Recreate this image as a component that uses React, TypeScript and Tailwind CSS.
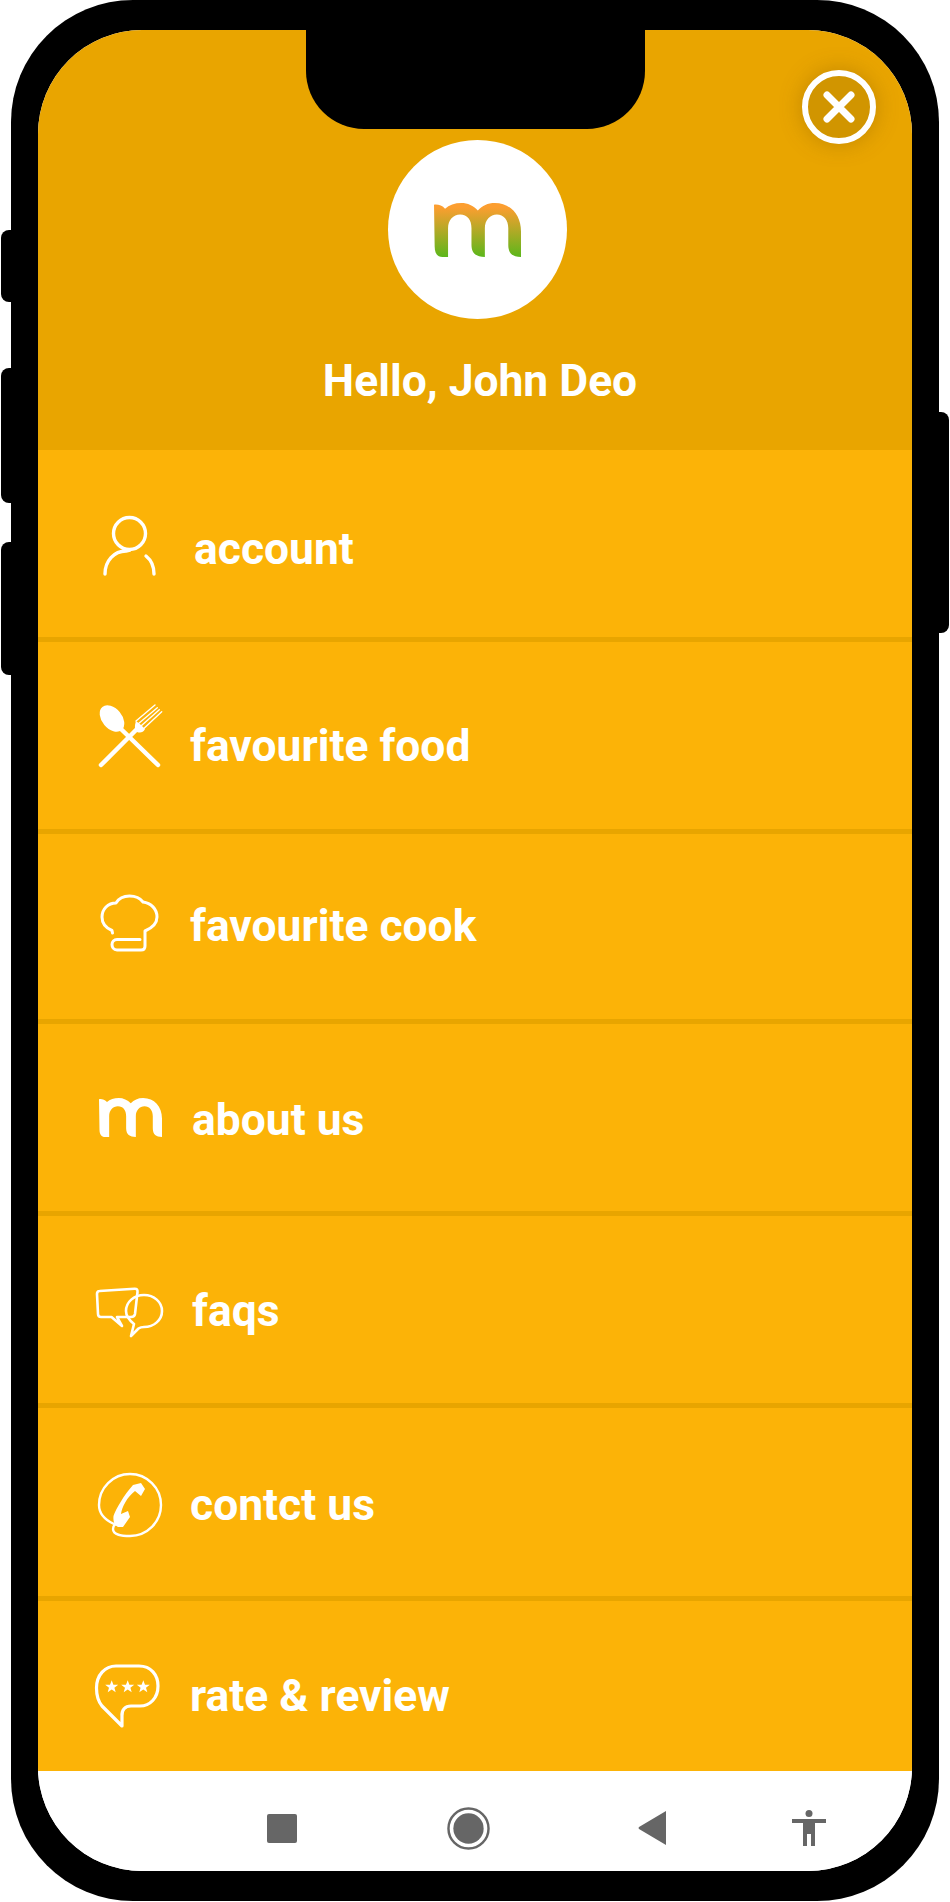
import { ReactNode } from 'react';

const stroke = { fill: 'none', stroke: 'white', strokeWidth: 3, strokeLinecap: 'round', strokeLinejoin: 'round' } as const;

const MARK =
  'M0 5C10 3 25 7 33 17C45 6 62 0 82 0C100 0 118 8 131 22C145 8 160 0 182 0C228 0 260 35 260 85L260 161C235 161 222 150 222 125L222 75C222 50 208 34 188 34C168 34 152 50 152 75L152 161C127 161 112 150 112 125L112 75C112 50 100 34 78 34C58 34 42 50 42 75L42 161L25 161C10 161 2 150 2 130Z';

function LogoMark({ className, gradient }: { className: string; gradient?: boolean }) {
  return (
    <svg viewBox="0 0 260 161" className={className} preserveAspectRatio="none">
      {gradient && (
        <defs>
          <linearGradient id="markFill" x1="0" y1="0" x2="0" y2="1">
            <stop offset="0.08" stopColor="#fc9e30" />
            <stop offset="1" stopColor="#5cb71b" />
          </linearGradient>
        </defs>
      )}
      <path d={MARK} fill={gradient ? 'url(#markFill)' : 'white'} />
    </svg>
  );
}

function Icon({ children }: { children: ReactNode }) {
  return (
    <svg viewBox="0 0 72 72" className="w-[72px] h-[72px] shrink-0">
      {children}
    </svg>
  );
}

const AccountIcon = () => (
  <Icon>
    <circle cx="35.5" cy="24.5" r="16" {...stroke} strokeWidth={3.4} />
    <path d="M11 65C11 52 20 42 32 42L36 41M52 47C57 51 60 58 60 65" {...stroke} strokeWidth={3.4} />
  </Icon>
);

const FoodIcon = () => (
  <Icon>
    <ellipse cx="18" cy="18.5" rx="15" ry="10" transform="rotate(50 18 18.5)" fill="white" />
    <path d="M27 29L64 65" {...stroke} strokeWidth={4.5} />
    <path d="M43 29L7 65" {...stroke} strokeWidth={4.5} />
    <path d="M42 21C40 27 41 31 43 32C46 33 49 33 51 29L47 25Z" fill="white" />
    <path d="M42 21L61 5M44.3 23.7L63.3 7.7M46.7 26.3L65.3 9.7M49.3 29L67.7 11.7" {...stroke} strokeWidth={1.4} />
  </Icon>
);

const CookIcon = () => (
  <Icon>
    <path
      d="M18.5 46L18 43.5C12 41 8 36 8 30C8 22 14 16 22 16C25 11 30 9 35.5 9C41 9 46 11 49 15C57 16 63 22 63 30C63 37 58 41 51 44L51 59C51 62 49 63 47 63L23 63C19.5 63 18 60 18 57.5C18 55 20 52.5 23 52.5L46 52.5"
      {...stroke}
    />
  </Icon>
);

const FaqIcon = () => (
  <Icon>
    <path d="M5.5 15L40.5 12.7Q43.8 12.5 43.5 16L41 38Q40.5 41 37 41L23 41L28 50L17.5 41L7 41Q4 41 4 38L3 18Q3 15 5.5 15Z" {...stroke} strokeWidth={2.6} />
    <path d="M40 48C35 44 32 40 32 35C32 26 40 19 50 19C60 19 68 26 68 35C68 44 60 51 50 51C48 51 46 51.5 44.5 52.5L37 60Z" {...stroke} strokeWidth={2.6} />
  </Icon>
);

const PhoneIcon = () => (
  <Icon>
    <path
      d="M20 55C9 50 5 44 5 36A31 31 0 0 1 36 5A31 31 0 0 1 67 36A31 31 0 0 1 36 67C28 67 19 66 19 60C19 58 20 56 22 55"
      {...stroke}
      strokeWidth={2.4}
    />
    <path d="M39 16C30 26 22 40 19.500 47C19 52 20 56 24 58L29 58L36 48L34 42L27 45C28 38 33 28 41 22L47 27L51 20L47 14Z" fill="white" />
  </Icon>
);

const Star = ({ x }: { x: number }) => (
  <polygon
    fill="white"
    points={[
      [0, -6.5], [1.7, -2], [6.5, -2], [2.7, 1], [4, 5.5], [0, 2.8], [-4, 5.5], [-2.7, 1], [-6.5, -2], [-1.7, -2],
    ]
      .map(([a, b]) => `${a + x},${b + 26.7}`)
      .join(' ')}
  />
);

const RateIcon = () => (
  <Icon>
    <path
      d="M28 66L8 46C4 41 2.500 35 2.500 28C2.500 15 11 6 22 6L45 6C57 6 64 15 64 26C64 38 56 46 46 46L37 46C31 46 27.500 50 28 56Z"
      {...stroke}
      strokeWidth={3.2}
    />
    <Star x={17.7} />
    <Star x={33.7} />
    <Star x={49.3} />
  </Icon>
);

const menu = [
  { label: 'account', icon: <AccountIcon />, row: 'h-[192px] pt-[3px]', text: 'ml-[28px] mt-[7px]' },
  { label: 'favourite food', icon: <FoodIcon />, row: 'h-[192px]', text: 'ml-[24px] mt-[20px]' },
  { label: 'favourite cook', icon: <CookIcon />, row: 'h-[190px] pb-[7px]', text: 'ml-[24px] mt-[6px]' },
  { label: 'about us', icon: <div className="w-[72px] flex justify-center shrink-0"><LogoMark className="w-[63px] h-[39px]" /></div>, row: 'h-[192px]', text: 'ml-[26px] mt-[5px]' },
  { label: 'faqs', icon: <FaqIcon />, row: 'h-[192px] pt-[5px]', text: 'ml-[26px] mb-[3px]' },
  { label: 'contct us', icon: <PhoneIcon />, row: 'h-[193px] pt-[6px]', text: 'ml-[24px]' },
];

export default function App() {
  return (
    <div className="relative w-[950px] h-[1902px] bg-white overflow-hidden font-['Roboto',sans-serif]">
      {/* side buttons */}
      <div className="absolute left-[1px] top-[230px] w-[20px] h-[72px] bg-black rounded-l-[8px]" />
      <div className="absolute left-[1px] top-[368px] w-[20px] h-[135px] bg-black rounded-l-[8px]" />
      <div className="absolute left-[1px] top-[542px] w-[20px] h-[133px] bg-black rounded-l-[8px]" />
      <div className="absolute right-[1px] top-[412px] w-[20px] h-[221px] bg-black rounded-r-[8px]" />

      <div className="relative ml-[11px] w-[928px] h-[1901px] bg-black rounded-[122px] pt-[30px] px-[27px]">
        <div className="relative w-[874px] h-[1841px] bg-white rounded-[104px] overflow-hidden flex flex-col">
          <div className="absolute z-10 left-[268px] top-0 w-[339px] h-[99px] bg-black rounded-b-[58px]" />

          <div className="relative h-[420px] shrink-0 bg-[#e9a500] flex flex-col items-center pt-[110px]">
            <div className="absolute left-[764px] top-[40px] w-[74px] h-[74px] rounded-full border-[6px] border-white bg-[#d19500] shadow-[0_0_22px_rgba(120,80,0,0.35)] flex items-center justify-center">
              <svg viewBox="0 0 32 32" className="w-[32px] h-[32px]">
                <path d="M4 4L28 28M28 4L4 28" fill="none" stroke="white" strokeWidth="7" strokeLinecap="round" />
              </svg>
            </div>
            <div className="w-[179px] h-[179px] ml-[5px] rounded-full bg-white flex items-center justify-center">
              <LogoMark gradient className="w-[87px] h-[54px]" />
            </div>
            <h1 className="mt-[39px] ml-[10px] text-[44.4px] leading-[46px] font-bold text-white">Hello, John Deo</h1>
          </div>

          <div className="flex-1 bg-[#fcb307] flex flex-col">
            {menu.map((m) => (
              <div key={m.label} className={`${m.row} shrink-0 border-b-[5px] border-[#e8a500] pl-[56px] flex items-center`}>
                {m.icon}
                <span className={`${m.text} text-[44.4px] leading-[46px] font-bold text-white`}>{m.label}</span>
              </div>
            ))}
            <div className="flex-1 pl-[56px] flex items-center pt-[19px]">
              <RateIcon />
              <span className="ml-[24px] text-[44.4px] leading-[46px] font-bold text-white">rate &amp; review</span>
            </div>
          </div>

          <div className="h-[100px] shrink-0 bg-white flex items-center pl-[229px] pt-[14px]">
            <div className="w-[30px] h-[29px] bg-[#666666] rounded-[2px]" />
            <svg viewBox="0 0 44 44" className="ml-[150px] w-[43px] h-[43px]">
              <circle cx="22" cy="22" r="20.500" fill="none" stroke="#666666" strokeWidth="2.500" />
              <circle cx="22" cy="22" r="15.500" fill="#666666" />
            </svg>
            <svg viewBox="0 0 28 34" className="ml-[148px] w-[28px] h-[34px]">
              <path d="M28 0L28 34L1 18Q0 17 1 16Z" fill="#666666" />
            </svg>
            <svg viewBox="0 0 34 36" className="ml-[126px] w-[34px] h-[36px]">
              <circle cx="17" cy="3.500" r="3.500" fill="#666666" />
              <path d="M0 9L34 9L34 13L23 13L23 36L19 36L19 24L15 24L15 36L11 36L11 13L0 13Z" fill="#666666" />
            </svg>
          </div>
        </div>
      </div>
    </div>
  );
}
